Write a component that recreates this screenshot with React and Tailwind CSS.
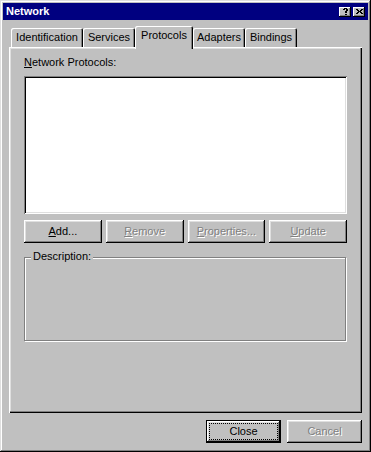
import React from "react"

const QUESTION = [".XXX.", "XX.XX", "...XX", "..XX.", "..XX.", ".....", "..XX."]
const CROSS = ["XX...XX", ".XX.XX.", "..XXX..", ".XX.XX.", "XX...XX"]

function PixelGlyph({ rows }) {
  return (
    <svg width={rows[0].length} height={rows.length} shapeRendering="crispEdges">
      {rows.flatMap((row, y) =>
        row.split("").map((c, x) => (c === "X" ? <rect key={x + "-" + y} x={x} y={y} width="1" height="1" fill="#000" /> : null))
      )}
    </svg>
  )
}

const tabs = [
  { label: "Identification", width: "w-[72px]" },
  { label: "Services", width: "w-[52px]" },
  { label: "Protocols", width: "w-[58px]", active: true },
  { label: "Adapters", width: "w-[52px]" },
  { label: "Bindings", width: "w-[52px]" },
]

function Button({ children, disabled, className = "" }) {
  return (
    <button
      className={`h-[23px] flex items-center justify-center bg-[#c0c0c0] shadow-[inset_-1px_-1px_0_#000,inset_1px_1px_0_#fff,inset_-2px_-2px_0_#808080,inset_2px_2px_0_#dfdfdf] ${
        disabled ? "text-[#808080] [text-shadow:1px_1px_0_#fff]" : "text-black"
      } ${className}`}
    >
      {children}
    </button>
  )
}

export default function App() {
  return (
    <div className="w-[371px] h-[452px] bg-[#c0c0c0] p-[3px] flex flex-col font-['Liberation_Sans',Arial,sans-serif] text-[11px] leading-[13px] text-black shadow-[inset_-1px_-1px_0_#000,inset_1px_1px_0_#dfdfdf,inset_-2px_-2px_0_#808080,inset_2px_2px_0_#fff]">
      {/* Title bar */}
      <div className="h-[17px] bg-[#000080] flex items-center justify-between pl-[3px] pr-[3px]">
        <span className="text-white font-bold text-[11px]">Network</span>
        <div className="flex gap-[2px]">
          <div className="w-[12px] h-[10px] flex items-center justify-center bg-[#c0c0c0] shadow-[inset_-1px_-1px_0_#000,inset_1px_1px_0_#fff,inset_-2px_-2px_0_#808080]">
            <PixelGlyph rows={QUESTION} />
          </div>
          <div className="w-[12px] h-[10px] flex items-center justify-center bg-[#c0c0c0] shadow-[inset_-1px_-1px_0_#000,inset_1px_1px_0_#fff,inset_-2px_-2px_0_#808080]">
            <PixelGlyph rows={CROSS} />
          </div>
        </div>
      </div>

      <div className="px-[6px]">
        {/* Tabs */}
        <div className="mt-[6px] h-[21px] pl-[2px] flex items-end">
          {tabs.map((tab) =>
            tab.active ? (
              <div
                key={tab.label}
                className={`${tab.width} h-[23px] -mb-[2px] relative z-10 pt-[3px] text-center bg-[#c0c0c0] rounded-t-[2px] shadow-[inset_1px_1px_0_#fff,inset_-1px_0_0_#000,inset_-2px_0_0_#808080]`}
              >
                {tab.label}
              </div>
            ) : (
              <div
                key={tab.label}
                className={`${tab.width} h-[19px] pt-[3px] text-center rounded-t-[2px] shadow-[inset_1px_1px_0_#fff,inset_-1px_0_0_#000,inset_-2px_0_0_#808080]`}
              >
                {tab.label}
              </div>
            )
          )}
        </div>

        {/* Tab panel */}
        <div className="w-[353px] h-[366px] pt-[9px] px-[15px] shadow-[inset_1px_1px_0_#fff,inset_-1px_-1px_0_#000,inset_-2px_-2px_0_#808080,inset_2px_2px_0_#dfdfdf]">
          <div>
            <u>N</u>etwork Protocols:
          </div>
          <div className="mt-[7px] h-[138px] bg-white shadow-[inset_1px_1px_0_#808080,inset_-1px_-1px_0_#fff,inset_2px_2px_0_#000,inset_-2px_-2px_0_#dfdfdf]" />

          <div className="mt-[6px] grid grid-cols-4 gap-[4px]">
            <Button>
              <u>A</u>dd...
            </Button>
            <Button disabled>
              <u>R</u>emove
            </Button>
            <Button disabled>
              <u>P</u>roperties...
            </Button>
            <Button disabled>
              <u>U</u>pdate
            </Button>
          </div>

          {/* Description group */}
          <div className="mt-[14px] w-[322px] h-[84px] border border-[#808080] shadow-[1px_1px_0_#fff,inset_1px_1px_0_#fff]">
            <div className="-mt-[8px] ml-[6px] w-fit px-[2px] bg-[#c0c0c0]">Description:</div>
          </div>
        </div>

        {/* Dialog buttons */}
        <div className="mt-[7px] flex justify-end gap-[6px]">
          <button className="w-[75px] h-[23px] border border-black bg-[#c0c0c0] p-[2px] shadow-[inset_-1px_-1px_0_#000,inset_1px_1px_0_#fff,inset_-2px_-2px_0_#808080,inset_2px_2px_0_#dfdfdf]">
            <span className="h-full flex items-center justify-center border border-dotted border-black">Close</span>
          </button>
          <Button disabled className="w-[75px]">
            Cancel
          </Button>
        </div>
      </div>
    </div>
  )
}
